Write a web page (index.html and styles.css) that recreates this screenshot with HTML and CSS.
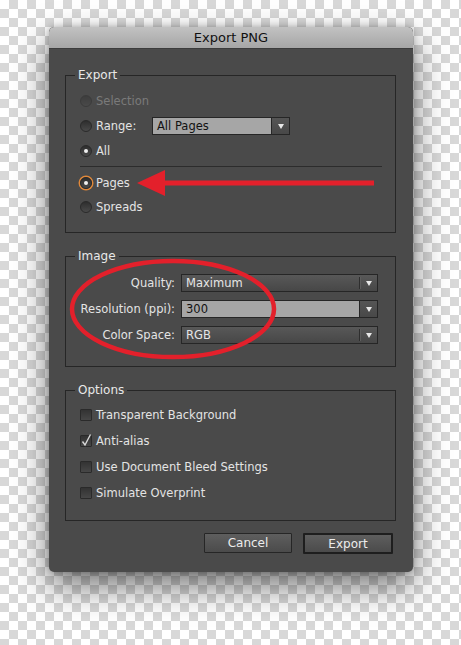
FILE: index.html
```html
<!DOCTYPE html>
<html lang="en">
<head>
<meta charset="utf-8">
<title>Export PNG</title>
<link rel="stylesheet" href="styles.css">
</head>
<body>
<div class="canvas">
  <div class="dialog">
    <div class="titlebar">Export PNG</div>
    <div class="content">
      <fieldset class="group">
        <legend>Export</legend>
        <div class="inner inner-export">
          <div class="row r24 disabled"><span class="radio"></span><span>Selection</span></div>
          <div class="row r26"><span class="radio"></span><span class="range-label">Range:</span>
            <div class="combo range"><span class="value">All Pages</span><span class="arrow"><i class="tri"></i></span></div>
          </div>
          <div class="row r24"><span class="radio checked"></span><span>All</span></div>
          <div class="sep"></div>
          <div class="row r24"><span class="radio checked focus"></span><span>Pages</span></div>
          <div class="row r24"><span class="radio"></span><span>Spreads</span></div>
        </div>
      </fieldset>

      <fieldset class="group">
        <legend>Image</legend>
        <div class="inner inner-image form">
          <label>Quality:</label>
          <div class="select"><span class="value">Maximum</span><span class="divider"></span><span class="arrow"><i class="tri"></i></span></div>
          <label>Resolution (ppi):</label>
          <div class="combo"><span class="value">300</span><span class="arrow"><i class="tri"></i></span></div>
          <label>Color Space:</label>
          <div class="select"><span class="value">RGB</span><span class="divider"></span><span class="arrow"><i class="tri"></i></span></div>
        </div>
      </fieldset>

      <fieldset class="group">
        <legend>Options</legend>
        <div class="inner inner-options">
          <div class="row r26"><span class="check"></span><span>Transparent Background</span></div>
          <div class="row r26"><span class="check checked"><svg viewBox="0 0 12 14" width="12" height="14"><path d="M2.5 8.5 L5 12 L10.5 1.5" fill="none" stroke="#d8d8d8" stroke-width="1.4"/></svg></span><span>Anti-alias</span></div>
          <div class="row r26"><span class="check"></span><span>Use Document Bleed Settings</span></div>
          <div class="row r26"><span class="check"></span><span>Simulate Overprint</span></div>
        </div>
      </fieldset>

      <div class="buttons">
        <button class="btn">Cancel</button>
        <button class="btn default">Export</button>
      </div>
    </div>
  </div>

  <svg class="annot" viewBox="0 0 461 645" width="461" height="645">
    <line x1="160" y1="183" x2="374" y2="183" stroke="#e3202b" stroke-width="5"/>
    <polygon points="137,183 165,170 165,196" fill="#e3202b"/>
    <ellipse cx="173" cy="309" rx="101" ry="48" fill="none" stroke="#e3202b" stroke-width="4.5"/>
  </svg>
</div>
</body>
</html>
```

FILE: styles.css
```css
html, body {
  margin: 0;
  padding: 0;
}
body {
  width: 461px;
  height: 645px;
  overflow: hidden;
  background-color: #ffffff;
  background-image:
    conic-gradient(#d8d8d8 25%, transparent 0 50%, #d8d8d8 0 75%, transparent 0);
  background-size: 18px 18px;
  font-family: "DejaVu Sans", Verdana, sans-serif;
}
.canvas {
  position: relative;
  width: 461px;
  height: 645px;
  padding-top: 27px;
  box-sizing: border-box;
}
.dialog {
  margin-left: 49px;
  width: 364px;
  background: #4a4a4a;
  border-radius: 5px;
  box-shadow: 0 14px 34px rgba(0, 0, 0, 0.55), 0 0 6px rgba(0,0,0,0.25);
  overflow: hidden;
}
.titlebar {
  height: 21px;
  line-height: 21px;
  text-align: center;
  font-size: 13px;
  color: #111;
  background: linear-gradient(#c2c2c2, #a6a6a6);
  border-bottom: 1px solid #3c3c3c;
  border-radius: 5px 5px 0 0;
}
.content {
  padding: 18px 17px 18px 16px;
  display: flex;
  flex-direction: column;
}
.group {
  margin: 0;
  border: 1px solid #262626;
  padding: 0;
  min-width: 0;
}
.group legend {
  margin-left: 9px;
  padding: 0 3px;
  font-size: 12px;
  line-height: 16px;
  color: #e8e8e8;
}
.group + .group {
  margin-top: 15px;
}
.row {
  display: flex;
  align-items: center;
  font-size: 11.5px;
  color: #e4e4e4;
}
.r24 { height: 24px; }
.r26 { height: 26px; }
.row.disabled { color: #7a7a7a; }
.row.disabled .radio { opacity: 0.45; }

.inner-export {
  padding: 6px 13px 13px 14px;
}
.radio {
  width: 12px;
  height: 12px;
  box-sizing: border-box;
  border-radius: 50%;
  border: 1px solid #2a2a2a;
  background: linear-gradient(#2e2e2e, #4a4a4a);
  margin-right: 4px;
  position: relative;
  flex: none;
}
.radio.checked::after {
  content: "";
  position: absolute;
  left: 3px;
  top: 3px;
  width: 4px;
  height: 4px;
  border-radius: 50%;
  background: #f0f0f0;
}
.radio.focus {
  box-shadow: 0 0 0 1.5px #e0883a;
}
.range-label {
  width: 56px;
}
.sep {
  height: 1px;
  background: #2c2c2c;
  margin: 3px 0 4px;
}

.combo, .select {
  display: flex;
  height: 18px;
  box-sizing: border-box;
  border: 1px solid #262626;
  font-size: 11.5px;
}
.combo.range {
  width: 138px;
}
.combo .value {
  flex: 1;
  background: #a6a6a6;
  color: #121212;
  padding-left: 4px;
  line-height: 16px;
}
.combo .arrow {
  border-left: 1px solid #262626;
}
.arrow {
  width: 17px;
  display: flex;
  align-items: center;
  justify-content: center;
  background: linear-gradient(#555, #484848);
}
.tri {
  width: 0;
  height: 0;
  border-left: 3.5px solid transparent;
  border-right: 3.5px solid transparent;
  border-top: 5px solid #e8e8e8;
}
.select {
  background: linear-gradient(#585858, #474747);
}
.select .value {
  flex: 1;
  color: #e6e6e6;
  padding-left: 4px;
  line-height: 16px;
}
.select .divider {
  width: 1px;
  margin: 2px 0;
  background: #2e2e2e;
  box-shadow: 1px 0 0 #5e5e5e;
}
.select .arrow {
  background: transparent;
}

.inner-image {
  padding: 6px 17px 18px 0;
}
.form {
  display: grid;
  grid-template-columns: 109px 1fr;
  column-gap: 6px;
  align-items: center;
  grid-auto-rows: 26px;
}
.form label {
  text-align: right;
  font-size: 11.5px;
  color: #e4e4e4;
}

.inner-options {
  padding: 4px 13px 14px 14px;
}
.check {
  width: 12px;
  height: 12px;
  box-sizing: border-box;
  border: 1px solid #2a2a2a;
  border-radius: 1px;
  background: linear-gradient(#333, #474747);
  margin-right: 4px;
  position: relative;
  flex: none;
}
.check svg {
  position: absolute;
  left: -1px;
  top: -3px;
}

.buttons {
  display: flex;
  justify-content: flex-end;
  gap: 11px;
  margin-top: 12px;
  padding-right: 3px;
}
.btn {
  font-family: "DejaVu Sans", Verdana, sans-serif;
  font-size: 12px;
  color: #ececec;
  height: 20px;
  width: 88px;
  padding: 0;
  border: 1px solid #262626;
  background: linear-gradient(#5e5e5e, #4b4b4b);
  border-radius: 1px;
}
.btn.default {
  width: 90px;
  border: 2px solid #1e1e1e;
  height: 21px;
}

.annot {
  position: absolute;
  left: 0;
  top: 0;
  pointer-events: none;
}
```
